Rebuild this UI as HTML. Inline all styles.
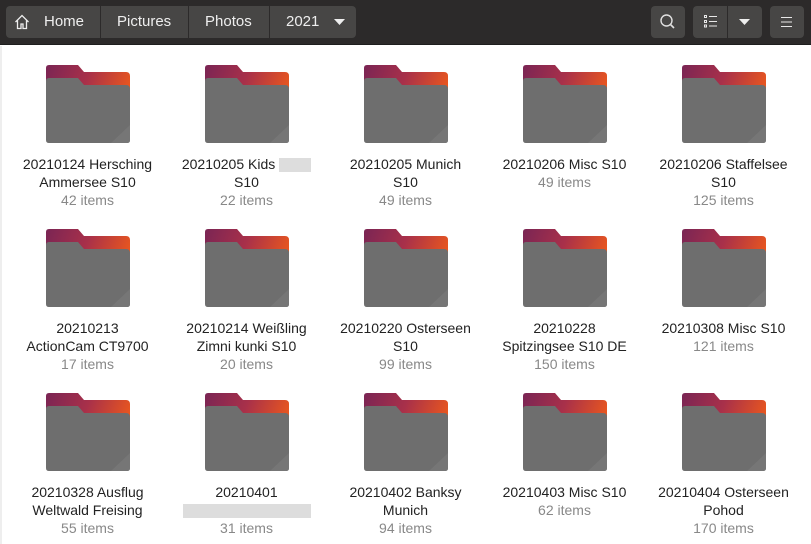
<!DOCTYPE html>
<html><head><style>
*{margin:0;padding:0;box-sizing:border-box}
body{width:811px;height:544px;overflow:hidden;background:#fff;font-family:"Liberation Sans","DejaVu Sans",sans-serif;position:relative}
.hb{position:absolute;left:0;top:0;width:811px;height:45px;background:#2c2a2a;border-bottom:1px solid #1e1e1e}
.btn{position:absolute;top:6px;height:32px;background:#474645;border-radius:4px;color:#e8e8e8;font-size:14px;line-height:32px}
.sep{position:absolute;top:6px;width:1px;height:32px;background:#2c2a2a}
.t{position:absolute;top:0;color:#eee;font-size:15px}
.f{position:absolute;width:159px;text-align:center}
.f svg{display:block;margin:0 auto}
.n{font-size:14px;color:#222;line-height:18px;margin-top:10px}
.c{font-size:14px;color:#888;line-height:19px}
.blur{display:inline-block;background:#ddd;height:14px;vertical-align:middle}
</style></head><body>
<div class="hb">
<div class="btn" style="left:6px;width:350px"></div>
<div class="sep" style="left:100px"></div><div class="sep" style="left:188px"></div><div class="sep" style="left:269px"></div>
<svg style="position:absolute;left:14px;top:14px" width="16" height="16" viewBox="0 0 16 16"><path d="M1.5 8 L8 1.5 L14.5 8 M3.5 6.5 V14.5 H7 V10 H9 V14.5 H12.5 V6.5" fill="none" stroke="#eee" stroke-width="1.3"/></svg>
<div class="t" style="left:44px;line-height:44px">Home</div>
<div class="t" style="left:117px;line-height:44px">Pictures</div>
<div class="t" style="left:205px;line-height:44px">Photos</div>
<div class="t" style="left:286px;line-height:44px">2021</div>
<svg style="position:absolute;left:334px;top:19px" width="12" height="7"><path d="M0 0 H11 L5.5 6Z" fill="#eee"/></svg>
<div class="btn" style="left:651px;width:34px"></div>
<svg style="position:absolute;left:659px;top:13px" width="18" height="18"><circle cx="7.5" cy="7.5" r="5.5" fill="none" stroke="#e0e0e0" stroke-width="1.4"/><path d="M11.5 11.5 L15 15" stroke="#e0e0e0" stroke-width="1.6"/></svg>
<div class="btn" style="left:693px;width:69px"></div>
<div class="sep" style="left:727px"></div>
<svg style="position:absolute;left:704px;top:15px" width="14" height="13"><g fill="none" stroke="#e8e8e8" stroke-width="1"><rect x="0.5" y="0.5" width="2" height="2"/><rect x="0.5" y="5.5" width="2" height="2"/><rect x="0.5" y="10" width="2" height="2"/></g><g fill="#e8e8e8"><rect x="5" y="1" width="8" height="1"/><rect x="5" y="6" width="8" height="1"/><rect x="5" y="10.5" width="8" height="1"/></g></svg>
<svg style="position:absolute;left:739px;top:19px" width="12" height="7"><path d="M0 0 H11 L5.5 6Z" fill="#eee"/></svg>
<div class="btn" style="left:770px;width:34px"></div>
<svg style="position:absolute;left:781px;top:16px" width="12" height="12"><g fill="#e8e8e8"><rect y="1" width="11" height="1"/><rect y="5.5" width="11" height="1"/><rect y="10" width="11" height="1"/></g></svg>
</div>
<div style="position:absolute;left:0;top:46px;width:2px;height:498px;background:#eee"></div>
<svg width="0" height="0" style="position:absolute"><defs>
<linearGradient id="g" x1="0" y1="0" x2="1" y2="0.3"><stop offset="0" stop-color="#7a2554"/><stop offset="0.5" stop-color="#a8304a"/><stop offset="1" stop-color="#e8561f"/></linearGradient>
</defs></svg>
<div id="grid"></div>
<script>
var d=[["20210124 Hersching<br>Ammersee S10","42 items"],["20210205 Kids <span class=blur style='width:32px'></span><br>S10","22 items"],["20210205 Munich<br>S10","49 items"],["20210206 Misc S10","49 items"],["20210206 Staffelsee<br>S10","125 items"],
["20210213<br>ActionCam CT9700","17 items"],["20210214 Weißling<br>Zimni kunki S10","20 items"],["20210220 Osterseen<br>S10","99 items"],["20210228<br>Spitzingsee S10 DE","150 items"],["20210308 Misc S10","121 items"],
["20210328 Ausflug<br>Weltwald Freising","55 items"],["20210401<br><span class=blur style='width:128px'></span>","31 items"],["20210402 Banksy<br>Munich","94 items"],["20210403 Misc S10","62 items"],["20210404 Osterseen<br>Pohod","170 items"]];
var h="";
d.forEach(function(x,i){var c=i%5,r=Math.floor(i/5);
h+='<div class="f" style="left:'+(8+c*159)+'px;top:'+(65+r*164)+'px"><svg width="86" height="80" viewBox="0 0 86 80"><path d="M4 0 H33 L39 7 H81 Q85 7 85 11 V70 H1 V3 Q1 0 4 0Z" fill="url(#g)"/><path d="M4 13 H33 L39 20 H81 Q85 20 85 24 V75 Q85 78 82 78 H4 Q1 78 1 75 V16 Q1 13 4 13Z" fill="#6e6e6e"/><path d="M85 60 V75 Q85 78 82 78 H66Z" fill="#767676"/></svg><div class="n">'+x[0]+'</div><div class="c">'+x[1]+'</div></div>';});
document.getElementById("grid").innerHTML=h;
</script>
</body></html>
